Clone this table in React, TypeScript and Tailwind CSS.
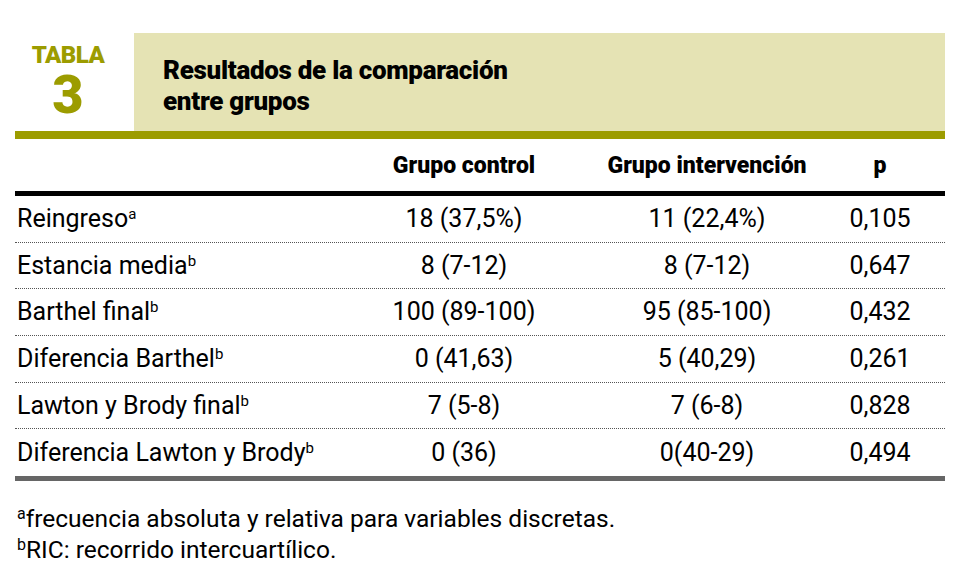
const rows = [
  { label: "Reingreso", sup: "a", c: "18 (37,5%)", i: "11 (22,4%)", p: "0,105" },
  { label: "Estancia media", sup: "b", c: "8 (7-12)", i: "8 (7-12)", p: "0,647" },
  { label: "Barthel final", sup: "b", c: "100 (89-100)", i: "95 (85-100)", p: "0,432" },
  { label: "Diferencia Barthel", sup: "b", c: "0 (41,63)", i: "5 (40,29)", p: "0,261" },
  { label: "Lawton y Brody final", sup: "b", c: "7 (5-8)", i: "7 (6-8)", p: "0,828" },
  { label: "Diferencia Lawton y Brody", sup: "b", c: "0 (36)", i: "0(40-29)", p: "0,494" },
];

const font = { fontFamily: 'Roboto, "Liberation Sans", sans-serif' };

export default function App() {
  return (
    <div className="w-[959px] h-[583px] bg-white text-black" style={font}>
      <div className="pt-[33px] pl-[15px] w-[945px]">
        {/* Title block */}
        <div className="flex h-[98px]">
          <div className="w-[119px] pr-[13px] flex flex-col items-center pt-[9px] text-[#9c9c00] font-black">
            <span className="text-[24px] leading-[26px] tracking-[-0.5px]">TABLA</span>
            <span className="text-[54px] leading-[54px]">3</span>
          </div>
          <div className="flex-1 bg-[#e5e3b4] pl-[29px] pt-[22px] font-black text-[26px] leading-[31px] tracking-[-0.3px]">
            <div>Resultados de la comparación</div>
            <div>entre grupos</div>
          </div>
        </div>
        <div className="h-[8px] bg-[#9c9c00]" />

        {/* Table */}
        <div className="grid grid-cols-[314px_270px_216px_130px] h-[52px] items-center font-black text-[23px] pt-[2px]">
          <div />
          <div className="text-center">Grupo control</div>
          <div className="text-center">Grupo intervención</div>
          <div className="text-center">p</div>
        </div>
        <div className="h-[5px] bg-black" />
        {rows.map((r, idx) => (
          <div
            key={r.label}
            className={`grid grid-cols-[314px_270px_216px_130px] h-[46.7px] items-center text-[25px] ${
              idx < rows.length - 1 ? "border-b border-dotted border-[#555]" : ""
            }`}
          >
            <div className="pl-[2px] whitespace-nowrap">
              {r.label}
              <sup className="text-[15px] relative -top-[8px]">{r.sup}</sup>
            </div>
            <div className="text-center">{r.c}</div>
            <div className="text-center">{r.i}</div>
            <div className="text-center">{r.p}</div>
          </div>
        ))}
        <div className="h-[5px] bg-[#666666]" />

        {/* Footnotes */}
        <div className="pt-[22px] pl-[2px] text-[24.5px] leading-[31px]">
          <div>
            <sup className="text-[16px] relative -top-[8px]">a</sup>frecuencia absoluta y relativa para variables discretas.
          </div>
          <div>
            <sup className="text-[16px] relative -top-[8px]">b</sup>RIC: recorrido intercuartílico.
          </div>
        </div>
      </div>
    </div>
  );
}
